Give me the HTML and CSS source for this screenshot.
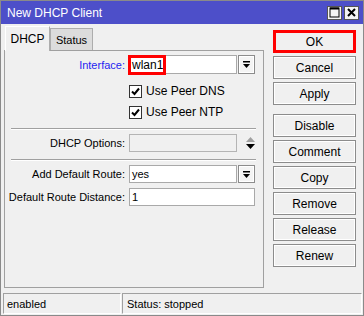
FILE: index.html
```html
<!DOCTYPE html>
<html lang="en">
<head>
  <meta charset="UTF-8"/>
  <title>New DHCP Client</title>
  <link rel="stylesheet" href="styles.css">
</head>
<body>

  <div class="window">
    <div class="titlebar">
      <span class="title">New DHCP Client</span>
      <div class="win-btns">
        <span class="win-btn">
          <svg width="11" height="11" viewBox="0 0 11 11"><rect x="1" y="1" width="9" height="9" fill="none" stroke="#000" stroke-width="1"/><line x1="1" y1="1.5" x2="10" y2="1.5" stroke="#000" stroke-width="2"/></svg>
        </span>
        <span class="win-btn">
          <svg width="11" height="11" viewBox="0 0 11 11"><path d="M2 2 L9 9 M9 2 L2 9" stroke="#000" stroke-width="2"/></svg>
        </span>
      </div>
    </div>

    <div class="main">
      <div class="left">
        <div class="tabs">
          <span class="tab active">DHCP</span>
          <span class="tab">Status</span>
        </div>

        <div class="panel">
          <div class="row row-iface">
            <label class="label blue">Interface:</label>
            <div class="field">
              <div class="input">wlan1<span class="mark"></span></div>
              <span class="drop"><svg width="9" height="9" viewBox="0 0 9 9"><rect x="1" y="1" width="7" height="1.5" fill="#000"/><path d="M1 4 H8 L4.5 8 Z" fill="#000"/></svg></span>
            </div>
          </div>

          <div class="check-row first">
            <span class="checkbox"><svg width="11" height="11" viewBox="0 0 11 11"><path d="M2 5.5 L4.5 8 L9 2.5" fill="none" stroke="#000" stroke-width="2"/></svg></span>
            <span>Use Peer DNS</span>
          </div>
          <div class="check-row">
            <span class="checkbox"><svg width="11" height="11" viewBox="0 0 11 11"><path d="M2 5.5 L4.5 8 L9 2.5" fill="none" stroke="#000" stroke-width="2"/></svg></span>
            <span>Use Peer NTP</span>
          </div>

          <div class="sep"></div>

          <div class="row">
            <label class="label">DHCP Options:</label>
            <div class="field">
              <div class="input disabled"></div>
              <span class="spin"><svg class="spin-icon" width="11" height="14" viewBox="0 0 11 14"><path d="M1 6 L10 6 L5.5 1 Z" fill="#a0a0a0"/><path d="M1 8 L10 8 L5.5 13 Z" fill="#000"/></svg></span>
            </div>
          </div>

          <div class="sep"></div>

          <div class="row">
            <label class="label">Add Default Route:</label>
            <div class="field">
              <div class="input">yes</div>
              <span class="drop"><svg width="9" height="9" viewBox="0 0 9 9"><rect x="1" y="1" width="7" height="1.5" fill="#000"/><path d="M1 4 H8 L4.5 8 Z" fill="#000"/></svg></span>
            </div>
          </div>

          <div class="row row-last">
            <label class="label">Default Route Distance:</label>
            <div class="field">
              <div class="input wide">1</div>
            </div>
          </div>
        </div>
      </div>

      <div class="actions">
        <button class="btn btn-ok">OK</button>
        <button class="btn">Cancel</button>
        <button class="btn">Apply</button>
        <button class="btn group">Disable</button>
        <button class="btn">Comment</button>
        <button class="btn">Copy</button>
        <button class="btn">Remove</button>
        <button class="btn">Release</button>
        <button class="btn">Renew</button>
      </div>
    </div>

    <div class="statusbar">
      <span class="cell cell-left">enabled</span>
      <span class="cell cell-right">Status: stopped</span>
    </div>
  </div>

</body>
</html>
```

FILE: styles.css
```css
* { box-sizing: border-box; margin: 0; padding: 0; }
body, html { font-family: 'Liberation Sans', Arial, sans-serif; font-size: 11px; color: #000; background: #f0f0f0; }

.window {
  width: 364px;
  height: 316px;
  border: 1px solid #8a8a8a;
  display: flex;
  flex-direction: column;
  background: #f0f0f0;
}

.titlebar {
  height: 23px;
  background: #4d4fc9;
  display: flex;
  align-items: center;
  justify-content: space-between;
  padding: 0 4px 0 6px;
}

.title {
  color: #fff;
  font-size: 12px;
}

.win-btns {
  display: flex;
  gap: 2px;
}

.win-btn {
  width: 15px;
  height: 14px;
  background: #f4f4f4;
  border: 1px solid #555;
  display: flex;
  align-items: center;
  justify-content: center;
}

.main {
  flex: 1;
  display: flex;
  padding: 1px 0 0 3px;
}

.left {
  width: 260px;
  display: flex;
  flex-direction: column;
}

.tabs {
  display: flex;
  align-items: flex-end;
  height: 25px;
  padding-left: 1px;
}

.tab {
  height: 22px;
  width: 43px;
  display: flex;
  align-items: center;
  justify-content: center;
  background: #dcdcdc;
  border: 1px solid #adadad;
  border-bottom: none;
}

.tab.active {
  height: 25px;
  width: 45px;
  background: #f0f0f0;
  border-color: #fff #adadad #adadad #fff;
  font-size: 12px;
  position: relative;
  top: 1px;
}

.panel {
  height: 238px;
  border: 1px solid #a0a0a0;
  padding-top: 4px;
  display: flex;
  flex-direction: column;
}

.row {
  display: flex;
  align-items: center;
  height: 18px;
  margin-top: 6px;
}

.row-iface {
  height: 19px;
  margin-top: 0;
}

.row-last {
  margin-top: 5px;
}

.label {
  width: 124px;
  padding-right: 4px;
  text-align: right;
  white-space: nowrap;
}

.label.blue {
  color: #1f1ff0;
}

.field {
  display: flex;
  align-items: center;
  height: 100%;
  gap: 1px;
}

.input {
  width: 108px;
  height: 100%;
  background: #fff;
  border: 1px solid #a9a9a9;
  padding-left: 2px;
  display: flex;
  align-items: center;
  position: relative;
}

.row-iface .input {
  font-size: 12px;
}

.input.wide {
  width: 126px;
}

.input.disabled {
  background: #f0f0f0;
  border-color: #b4b4b4;
}

.mark {
  position: absolute;
  left: -2px;
  top: -1px;
  width: 38px;
  height: 20px;
  border: 3px solid #f00;
}

.drop {
  width: 17px;
  height: 100%;
  background: #f4f4f4;
  border: 1px solid #8c8c8c;
  box-shadow: inset 0 0 0 1px #fff;
  display: flex;
  align-items: center;
  justify-content: center;
}

.spin {
  width: 17px;
  height: 16px;
  margin-left: 4px;
  display: flex;
  align-items: center;
  justify-content: center;
}

.spin-icon {
  display: block;
  flex-shrink: 0;
}

.check-row {
  display: flex;
  align-items: center;
  height: 18px;
  margin-top: 3px;
  padding-left: 124px;
  gap: 4px;
  font-size: 12px;
}

.check-row.first {
  margin-top: 8px;
}

.checkbox {
  width: 13px;
  height: 13px;
  background: #fff;
  border: 1px solid #333;
  display: flex;
  align-items: center;
  justify-content: center;
}

.sep {
  height: 2px;
  margin: 7px 7px 0 6px;
  border-top: 1px solid #a0a0a0;
  border-bottom: 1px solid #fff;
}

.sep + .row {
  margin-top: 4px;
}

.actions {
  display: flex;
  flex-direction: column;
  gap: 3px;
  padding: 5px 0 0 9px;
}

.btn {
  width: 83px;
  height: 23px;
  background: #f0f0f0;
  border: 1px solid #8c8c8c;
  box-shadow: inset 0 0 0 1px #fff;
  font-family: inherit;
  font-size: 12px;
  color: #000;
}

.btn.group {
  margin-top: 6px;
}

.btn-ok {
  border: 3px solid #f00;
  box-shadow: none;
}

.statusbar {
  height: 21px;
  display: flex;
  gap: 1px;
  padding: 0 1px 0 2px;
  margin-bottom: 1px;
}

.cell {
  height: 100%;
  border: 1px solid;
  border-color: #a0a0a0 #fff #fff #a0a0a0;
  display: flex;
  align-items: center;
  padding-left: 3px;
}

.cell-left {
  width: 118px;
}

.cell-right {
  flex: 1;
  padding-left: 4px;
}
```
